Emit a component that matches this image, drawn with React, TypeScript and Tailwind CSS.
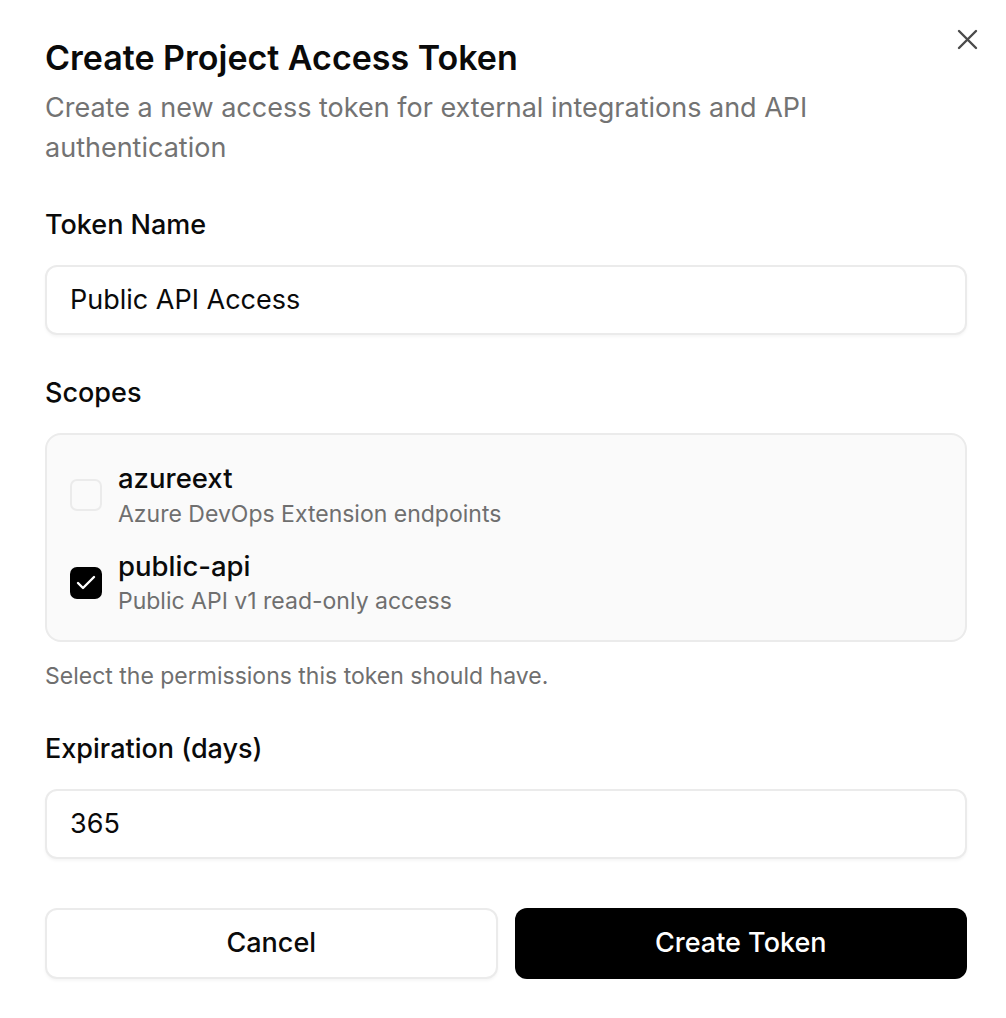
import React from "react";

function CheckIcon() {
  return (
    <svg width="24" height="24" viewBox="0 0 24 24" fill="none" stroke="white" strokeWidth="2.4" strokeLinecap="round" strokeLinejoin="round">
      <path d="M20 6 9 17l-5-5" />
    </svg>
  );
}

export default function App() {
  return (
    <div className="min-h-[1018px] w-[1006px] bg-white text-[#0a0a0a]" style={{ fontFamily: "Inter, 'Noto Sans', sans-serif" }}>
      <div className="relative flex flex-col pl-[45px] pr-[39px] pt-[34px] pb-[39px]">
        <button className="absolute right-[28px] top-[29px] flex h-[21px] w-[21px] items-center justify-center text-[#4a4a4a]">
          <svg width="21" height="21" viewBox="0 0 21 21" fill="none" stroke="currentColor" strokeWidth="2.4" strokeLinecap="round">
            <path d="M2 2 19 19M19 2 2 19" />
          </svg>
        </button>
        <h2 className="text-[34px] font-semibold leading-[48px]">Create Project Access Token</h2>
        <p className="mt-[6px] w-[820px] text-[27px] leading-[40px] text-[#737373]">
          Create a new access token for external integrations and API authentication
        </p>

        <label className="mt-[39px] text-[27px] font-medium leading-[36px]">Token Name</label>
        <div className="mt-[22px] flex h-[70px] items-center rounded-[12px] border-2 border-[#ebebeb] bg-white px-[23px] text-[27px] shadow-[0_2px_3px_rgba(0,0,0,0.04)]">
          Public API Access
        </div>

        <label className="mt-[40px] text-[27px] font-medium leading-[36px]">Scopes</label>
        <div className="mt-[22px] flex flex-col gap-[18px] rounded-[16px] border-2 border-[#ebebeb] bg-[#fafafa] px-[23px] pt-[25px] pb-[23px]">
          <div className="flex items-center gap-[16px]">
            <div className="h-[32px] w-[32px] shrink-0 rounded-[7px] border-2 border-[#ebebeb] bg-[#fafafa]" />
            <div className="flex flex-col">
              <span className="text-[27.5px] font-medium leading-[36px]">azureext</span>
              <span className="mt-[2px] text-[23px] leading-[32px] text-[#6f6f6f]">Azure DevOps Extension endpoints</span>
            </div>
          </div>
          <div className="flex items-center gap-[16px]">
            <div className="flex h-[32px] w-[32px] shrink-0 items-center justify-center rounded-[7px] bg-black">
              <CheckIcon />
            </div>
            <div className="flex flex-col">
              <span className="text-[27.5px] font-medium leading-[36px]">public-api</span>
              <span className="mt-[1px] text-[23px] leading-[32px] text-[#6f6f6f]">Public API v1 read-only access</span>
            </div>
          </div>
        </div>
        <p className="mt-[18px] text-[23px] leading-[32px] text-[#6f6f6f]">Select the permissions this token should have.</p>

        <label className="mt-[39px] text-[27px] font-medium leading-[36px]">Expiration (days)</label>
        <div className="mt-[22px] flex h-[70px] items-center rounded-[12px] border-2 border-[#ebebeb] bg-white px-[23px] text-[27px] shadow-[0_2px_3px_rgba(0,0,0,0.04)]">
          365
        </div>

        <div className="mt-[49px] grid grid-cols-2 gap-[17px]">
          <button className="flex h-[71px] items-center justify-center rounded-[12px] border-2 border-[#ebebeb] bg-white text-[27px] font-medium shadow-[0_2px_3px_rgba(0,0,0,0.04)]">
            Cancel
          </button>
          <button className="flex h-[71px] items-center justify-center rounded-[12px] bg-black text-[27px] font-medium text-white">
            Create Token
          </button>
        </div>
      </div>
    </div>
  );
}
